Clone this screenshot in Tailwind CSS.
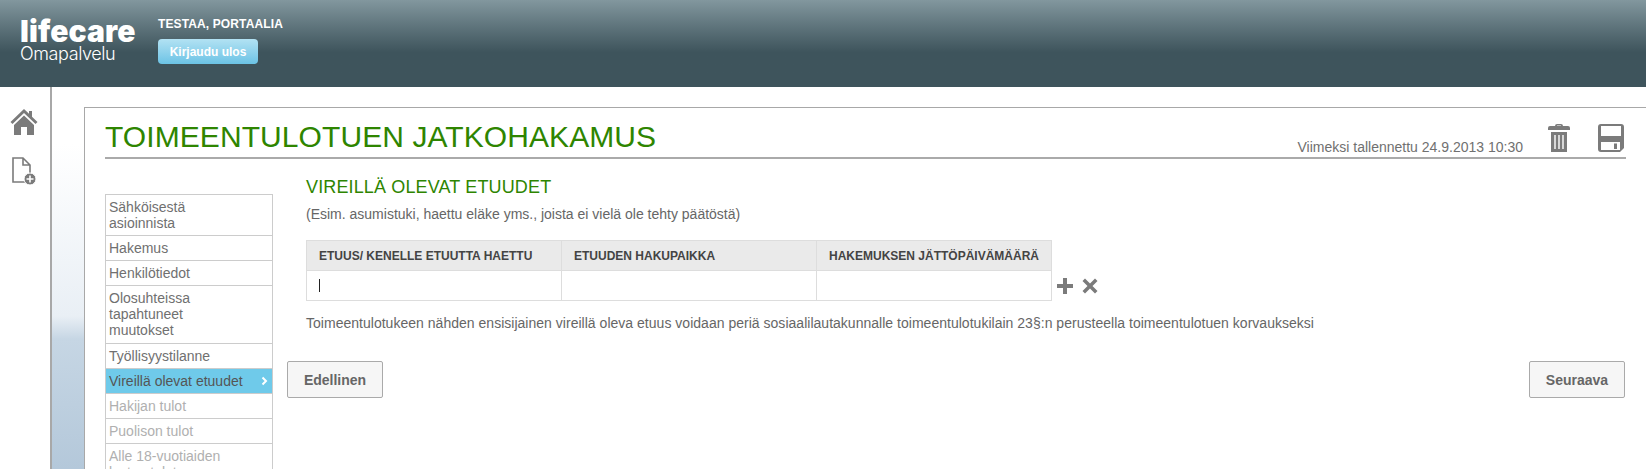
<!DOCTYPE html>
<html lang="fi">

<head>
  <meta charset="UTF-8">
  <title>Lifecare Omapalvelu</title>
  <script src="https://cdn.jsdelivr.net/npm/@tailwindcss/browser@4"></script>
</head>

<body class="h-[469px] overflow-hidden bg-white font-['Liberation_Sans',Arial,sans-serif] text-[#666]">

  <!-- Ylapalkki -->
  <header class="flex h-[87px] bg-gradient-to-b from-[#82979e] via-[#3e545c] via-60% to-[#3e545c] pl-5 text-white">
    <div class="w-[138px] pt-[18px]">
      <div class="font-['Inter',sans-serif] text-[30px] leading-[27px] font-black tracking-[0.1px]">lifecare</div>
      <div class="font-['Inter',sans-serif] text-[18px] leading-[18px] font-light tracking-[-0.4px]">Omapalvelu</div>
    </div>
    <div class="pt-4">
      <div class="text-xs leading-[16px] font-bold tracking-[0.12px]">TESTAA, PORTAALIA</div>
      <button class="mt-[7px] flex h-[25px] w-[100px] items-center justify-center rounded-[4px] bg-gradient-to-b from-[#b2e2f3] to-[#6bc3e5] text-xs font-bold text-white">Kirjaudu ulos</button>
    </div>
  </header>

  <div class="flex h-[382px]">
    <!-- Sivupalkki -->
    <aside class="flex w-[50px] shrink-0 flex-col items-center pt-[21px]">
      <svg class="ml-[-2px] h-[28px] w-[28px]" viewBox="0 0 28 28" fill="#7b7b7b">
        <path d="M14 1 L0.5 14 L2.5 16 L14 5 L25.5 16 L27.5 14 L22 8.7 V3 H19 V5.8 Z" />
        <path d="M14 7.5 L4 17 V27 H11 V19 H17 V27 H24 V17 Z" />
      </svg>
      <svg class="mt-[21px] ml-[-2px] h-[28px] w-[25px]" viewBox="0 0 25 28" fill="none">
        <path d="M1 1 H11 L18 8 V25 H1 Z M11 1 V8 H18" stroke="#7b7b7b" stroke-width="1.6" />
        <circle cx="18" cy="22" r="6" fill="#7b7b7b" stroke="#fff" stroke-width="1" />
        <path d="M18 18.5 V25.5 M14.5 22 H21.5" stroke="#fff" stroke-width="1.6" />
      </svg>
    </aside>

    <!-- Tausta ja sisalto -->
    <div class="flex min-w-0 flex-1 border-l-2 border-[#a8a8a8] bg-[linear-gradient(to_bottom,#fff_15%,#e9eff5_60%,#c6d6e4_66%,#b4c8da_100%)] pt-5 pl-8">
      <main class="flex-1 border-t border-l border-[#a8a8a8] bg-white pt-[11px] pr-5 pl-5">
        <div class="flex h-[40px] items-start border-b-2 border-[#aaa]">
          <h1 class="text-[30px] leading-[35px] tracking-[0.08px] text-[#2e8500]">TOIMEENTULOTUEN JATKOHAKAMUS</h1>
          <span class="mt-[20px] ml-auto text-sm leading-[16px] text-[#707070]">Viimeksi tallennettu 24.9.2013 10:30</span>
          <svg class="mt-[5px] ml-[25px] h-[28px] w-[22px]" viewBox="0 0 22 28" fill="#7b7b7b">
            <path d="M7 2 Q7 0 9 0 H13 Q15 0 15 2 H20 Q22 2 22 4 V6 H0 V4 Q0 2 2 2 Z M9 1.5 V2 H13 V1.5 Z" />
            <path d="M3 8 H19 V28 H3 Z" />
            <path d="M7 11 V25 M11 11 V25 M15 11 V25" stroke="#fff" stroke-width="1.4" />
          </svg>
          <svg class="mt-[5px] mr-[2px] ml-[28px] h-[28px] w-[26px]" viewBox="0 0 26 28" fill="#7b7b7b">
            <path fill-rule="evenodd" d="M3 0 H23 Q26 0 26 3 V24 L22 28 H3 Q0 28 0 25 V3 Q0 0 3 0 Z M3 2 V12 H23 V2 Z M3 18 V26 H22 V18 Z" />
            <rect x="16" y="19.5" width="3" height="5.5" />
          </svg>
        </div>

        <div class="flex items-start">
          <!-- Vaiheet -->
          <nav class="mt-[35px] w-[168px] shrink-0 border border-b-0 border-[#ccc] text-sm leading-[16px]">
            <a class="block border-b border-[#ccc] px-[3px] pt-1 pb-1 text-[#707070]">Sähköisestä<br>asioinnista</a>
            <a class="block border-b border-[#ccc] px-[3px] pt-1 pb-1 text-[#707070]">Hakemus</a>
            <a class="block border-b border-[#ccc] px-[3px] pt-1 pb-1 text-[#707070]">Henkilötiedot</a>
            <a class="block border-b border-[#ccc] px-[3px] pt-1 pb-[5px] text-[#707070]">Olosuhteissa<br>tapahtuneet<br>muutokset</a>
            <a class="block border-b border-[#ccc] px-[3px] pt-1 pb-1 text-[#707070]">Työllisyystilanne</a>
            <a class="flex items-center justify-between border-b border-[#ccc] bg-[#6fcaea] pt-1 pr-1 pb-1 pl-[3px] text-[#555]">
              Vireillä olevat etuudet
              <svg class="h-[10px] w-[7px]" viewBox="0 0 7 10" fill="none"><path d="M1.5 1.5 L5 5 L1.5 8.5" stroke="#fff" stroke-width="2" /></svg>
            </a>
            <a class="block border-b border-[#ccc] px-[3px] pt-1 pb-1 text-[#b0b0b0]">Hakijan tulot</a>
            <a class="block border-b border-[#ccc] px-[3px] pt-1 pb-1 text-[#b0b0b0]">Puolison tulot</a>
            <a class="block border-b border-[#ccc] px-[3px] pt-1 pb-1 text-[#b0b0b0]">Alle 18-vuotiaiden<br>lasten tulot</a>
          </nav>

          <!-- Lomake -->
          <section class="min-w-0 flex-1 pt-[19px] pl-[14px]">
            <div class="pl-[19px]">
              <h2 class="text-[18px] leading-[18px] tracking-[0.14px] text-[#2e8500]">VIREILLÄ OLEVAT ETUUDET</h2>
              <p class="mt-[10px] text-sm leading-[16px] text-[#666]">(Esim. asumistuki, haettu eläke yms., joista ei vielä ole tehty päätöstä)</p>

              <div class="mt-[18px] flex items-end">
                <table class="w-[746px] table-fixed border-collapse">
                  <thead>
                    <tr class="h-[30px] bg-[#eaeaea] text-left text-xs font-bold text-[#444]">
                      <th class="w-[255px] border border-[#ddd] pl-3 font-bold">ETUUS/ KENELLE ETUUTTA HAETTU</th>
                      <th class="w-[255px] border border-[#ddd] pl-3 font-bold">ETUUDEN HAKUPAIKKA</th>
                      <th class="border border-[#ddd] pl-3 font-bold">HAKEMUKSEN JÄTTÖPÄIVÄMÄÄRÄ</th>
                    </tr>
                  </thead>
                  <tbody>
                    <tr class="h-[30px]">
                      <td class="border border-[#ddd] pl-3"><div class="h-[13px] w-px bg-[#222]"></div></td>
                      <td class="border border-[#ddd]"></td>
                      <td class="border border-[#ddd]"></td>
                    </tr>
                  </tbody>
                </table>
                <svg class="mb-[7px] ml-[5px] h-[16px] w-[16px]" viewBox="0 0 16 16" fill="#7b7b7b"><path d="M6 0 H10 V6 H16 V10 H10 V16 H6 V10 H0 V6 H6 Z" /></svg>
                <svg class="mb-[7px] ml-[9px] h-[16px] w-[16px]" viewBox="0 0 16 16" fill="#7b7b7b"><path d="M3 0.5 L8 5.5 L13 0.5 L15.5 3 L10.5 8 L15.5 13 L13 15.5 L8 10.5 L3 15.5 L0.5 13 L5.5 8 L0.5 3 Z" /></svg>
              </div>

              <p class="mt-[14px] text-sm leading-[16px] tracking-[0.02px] whitespace-nowrap text-[#666]">Toimeentulotukeen nähden ensisijainen vireillä oleva etuus voidaan periä sosiaalilautakunnalle toimeentulotukilain 23§:n perusteella toimeentulotuen korvaukseksi</p>
            </div>

            <div class="mt-[30px] flex justify-between pr-px">
              <button class="h-[37px] w-[96px] rounded-[2px] border border-[#aaa] bg-[#f6f6f6] text-sm font-bold text-[#666]">Edellinen</button>
              <button class="h-[37px] w-[96px] rounded-[2px] border border-[#aaa] bg-[#f6f6f6] text-sm font-bold text-[#666]">Seuraava</button>
            </div>
          </section>
        </div>
      </main>
    </div>
  </div>
</body>

</html>
